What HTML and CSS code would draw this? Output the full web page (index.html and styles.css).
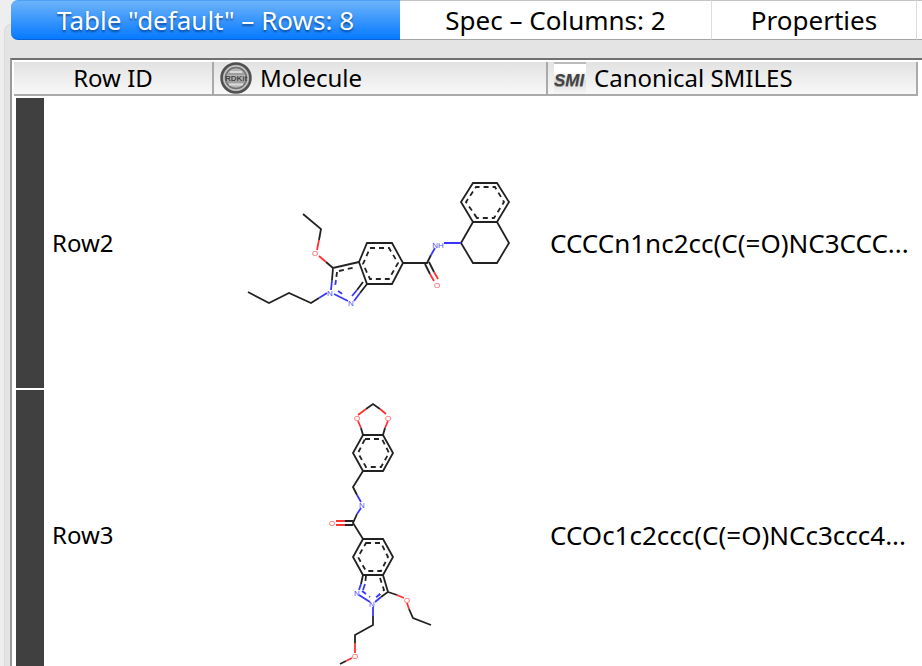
FILE: index.html
```html
<!DOCTYPE html>
<html lang="en">
<head>
<meta charset="utf-8">
<title>Table "default"</title>
<link rel="stylesheet" href="styles.css">
</head>
<body>
<div class="window">
  <div class="tabs" role="tablist">
    <button class="tab tab-active" role="tab" aria-selected="true">Table "default" – Rows: 8</button>
    <button class="tab tab-spec" role="tab" aria-selected="false">Spec – Columns: 2</button>
    <button class="tab tab-props" role="tab" aria-selected="false">Properties</button>
    <button class="tab tab-more" role="tab" aria-selected="false" aria-label="Flow Variables"></button>
  </div>
  <main class="panel">
    <div class="viewport">
      <table class="grid">
        <colgroup><col class="col-id"><col class="col-mol"><col></colgroup>
        <thead>
          <tr>
            <th scope="col" class="head-id">Row ID</th>
            <th scope="col"><span class="head">
              <svg class="icon" viewBox="0 0 32 32" aria-hidden="true">
                <circle cx="16" cy="16" r="14.5" fill="#999" stroke="#505050" stroke-width="2.5"/>
                <circle cx="16" cy="16" r="12" fill="#aaa" stroke="#c8c8c8" stroke-width="1.3"/>
                <circle cx="16" cy="16" r="10.500" fill="#b4b4b4" stroke="#707070" stroke-width="1.5"/>
                <path d="M10 10h12M9 22.500h14" stroke="#d8d8d8" stroke-width="2"/>
                <path d="M5 12h22M5 20h22" stroke="#888" stroke-width="1"/>
                <text x="16" y="19" class="badge-text">RDKit</text>
              </svg>Molecule</span></th>
            <th scope="col"><span class="head">
              <svg class="icon" viewBox="0 0 32 32" aria-hidden="true">
                <defs><linearGradient id="fade" x1="0" y1="0" x2="0" y2="1"><stop offset="0" stop-color="#fff"/><stop offset=".3" stop-color="#fff"/><stop offset=".6" stop-color="#ddd"/><stop offset="1" stop-color="#f6f6f6"/></linearGradient></defs>
                <path d="M0 0h32v32H0z" fill="url(#fade)"/>
                <path d="M0 1h32" stroke="#bbb" stroke-width="2"/>
                <text x="15" y="25" class="smi-shadow">SMI</text>
                <text x="15" y="24" class="smi-text">SMI</text>
              </svg>Canonical SMILES</span></th>
          </tr>
        </thead>
        <tbody>
          <tr>
            <th scope="row"><span class="row-id">Row2</span></th>
            <td>
              <svg class="molecule" viewBox="214 98 334 290" role="img" aria-label="Structure of Row2">
                <g class="bond">
                  <path d="M303 214l18 15-2 11M326 262l7 6 26-6M333 268l-1 12M248 292l21 11 20-10 22 10 8-5"/>
                  <path d="M359 262l8-19h25l11 20-11 21h-25zM367 284l-7 9M363 282l-6 8M403 263h24l4-8M425 264l5 10M429 262l5 10"/>
                  <path d="M461 243l12-21h24l12 21-12 20h-24zM473 222l-12-20 12-19h24l12 19-12 20"/>
                  <path class="dash" d="M370 248h19l9 15-9 16h-19l-7-15zM339 271l17-4M337 272l-1 8M477 218l-11-16 10-15h19l9 15-10 16z"/>
                </g>
                <g class="bond oxygen"><path d="M319 240l-2 10M319 256l7 6M430 274l4 7M434 272l4 7"/></g>
                <g class="bond nitrogen"><path d="M332 280l-1 10M319 298l8-5M334 294l14 7M360 293l-6 8M357 290l-5 6M431 255l4-7M444 243h17"/><path class="dash" d="M336 280l-1 7M338 291l6 4"/></g>
                <g class="atom oxygen-label"><text x="315" y="256">O</text><text x="437" y="288">O</text></g>
                <g class="atom nitrogen-label"><text x="330" y="296">N</text><text x="351" y="306">N</text><text x="438" y="248">NH</text></g>
              </svg>
            </td>
            <td class="smiles">CCCCn1nc2cc(C(=O)NC3CCC...</td>
          </tr>
          <tr>
            <th scope="row"><span class="row-id">Row3</span></th>
            <td>
              <svg class="molecule" viewBox="214 390 334 290" role="img" aria-label="Structure of Row3">
                <g class="bond">
                  <path d="M366 409l7-5 7 5M361 428l2 7h20l2-7M363 435l-10 18 10 18h20l10-18-10-18M363 471l-10 16 4 8M357 514l-4 9 10 16M353 521h-8M353 525h-8"/>
                  <path d="M363 539h20l10 18-10 18h-20l-10-18zM363 575l-2 9M383 575l5 17-7 5M388 592l9 3M409 609l4 9 18 7M373 616v9l-18 10v8M340 664l6-3"/>
                  <path class="dash" d="M365 439h17l7 14-8 14h-15l-8-14zM366 543h15l7 14-7 14h-15l-8-14zM366 576l-1 8M380 578l4 12-5 5"/>
                </g>
                <g class="bond oxygen"><path d="M366 409l-8 6M358 421l3 7M380 409l6 5M388 421l-3 7M345 521h-9M345 525h-9M397 595l7 3M407 603l2 6M355 643v10M352 658l-6 3"/></g>
                <g class="bond nitrogen"><path d="M357 495l4 7M361 508l-4 6M361 584l-2 6M365 584l-2 6M359 595l11 7M381 597l-6 5M373 607v9"/><path class="dash" d="M362 591l8 6M380 594l-6 5"/></g>
                <g class="atom oxygen-label"><text x="357" y="421">O</text><text x="388" y="421">O</text><text x="332" y="526">O</text><text x="407" y="603">O</text><text x="355" y="659">O</text></g>
                <g class="atom nitrogen-label"><text x="362" y="508">N</text><text x="357" y="596">N</text><text x="372" y="607">N</text></g>
              </svg>
            </td>
            <td class="smiles">CCOc1c2ccc(C(=O)NCc3ccc4...</td>
          </tr>
        </tbody>
      </table>
    </div>
  </main>
</div>
</body>
</html>
```
FILE: styles.css
```css
* { box-sizing: border-box; }
body {
  margin: 0;
  background: #eee;
  color: #000;
  font-family: "Noto Sans", "Open Sans", sans-serif;
  font-size: 24px;
}
.window {
  display: grid;
  grid-template-rows: 24px 1fr;
  height: 100vh;
  overflow: hidden;
}
.tabs {
  display: flex;
  height: 40px;
  padding-left: 11px;
  z-index: 1;
  overflow: hidden;
}
.tab {
  flex: none;
  height: 40px;
  margin: 0;
  padding: 0;
  border: 0;
  border-top: 1px solid #c4c4c4;
  border-right: 1px solid #ddd;
  border-bottom: 1px solid #a5a5a5;
  border-radius: 0;
  background: #fff;
  color: #000;
  font-family: inherit;
  font-size: 26px;
  line-height: 38px;
  white-space: nowrap;
}
.tab-active {
  width: 389px;
  border-top-color: #4ba0f8;
  border-right: 0;
  border-bottom-color: #0763dd;
  border-radius: 7px 0 0 7px;
  background: linear-gradient(#6cb3fa, #067aff);
  color: #fff;
  text-shadow: 0 2px 2px rgba(0, 40, 100, .6);
}
.tab-spec { width: 312px; }
.tab-props { width: 205px; }
.tab-more { width: 160px; }
.panel {
  min-height: 0;
  margin-left: 4px;
  padding: 33px 0 0 5px;
  border: 1px solid #dadada;
  border-right: 0;
  border-bottom: 0;
  border-radius: 7px 0 0 0;
  background: #e4e4e4;
}
.viewport {
  height: 100%;
  padding: 2px 4px 0 2px;
  overflow: hidden;
  border-top: 2px solid #707070;
  border-left: 2px solid #999;
  background: #fff;
}
.grid {
  width: 100%;
  table-layout: fixed;
  border-collapse: separate;
  border-spacing: 0;
}
.col-id { width: 200px; }
.col-mol { width: 334px; }
th, td {
  padding: 0;
  font-weight: 400;
  text-align: left;
}
thead th {
  height: 34px;
  padding-left: 6px;
  border-right: 2px solid #aaa;
  border-bottom: 2px solid #aaa;
  background: linear-gradient(#e2e2e2, #f8f8f8);
  line-height: 32px;
  white-space: nowrap;
}
thead .head-id { padding: 0; text-align: center; }
.head { display: flex; gap: 8px; }
.icon { flex: none; width: 32px; height: 32px; }
.badge-text {
  fill: #444;
  font: bold 8px "Liberation Sans", sans-serif;
  text-anchor: middle;
}
.smi-text, .smi-shadow {
  fill: #444;
  font: italic bold 17px "Liberation Sans", sans-serif;
  text-anchor: middle;
}
.smi-shadow { fill: #999; }
tbody th, tbody td { padding-top: 2px; }
.row-id {
  display: block;
  height: 290px;
  margin-left: 2px;
  padding-left: 8px;
  border-left: 28px solid #404040;
  line-height: 290px;
}
.molecule { display: block; width: 100%; height: 290px; }
tbody .smiles {
  padding-left: 2px;
  font-size: 26px;
  white-space: nowrap;
}
.bond { fill: none; stroke: #222; stroke-width: 1.8; }
.oxygen { stroke: #ff3030; }
.nitrogen { stroke: #3838ff; }
.dash { stroke-dasharray: 5 4; }
.atom {
  font: 8px "Liberation Sans", sans-serif;
  text-anchor: middle;
}
.oxygen-label { fill: #ff5050; }
.nitrogen-label { fill: #5050ff; }
```
